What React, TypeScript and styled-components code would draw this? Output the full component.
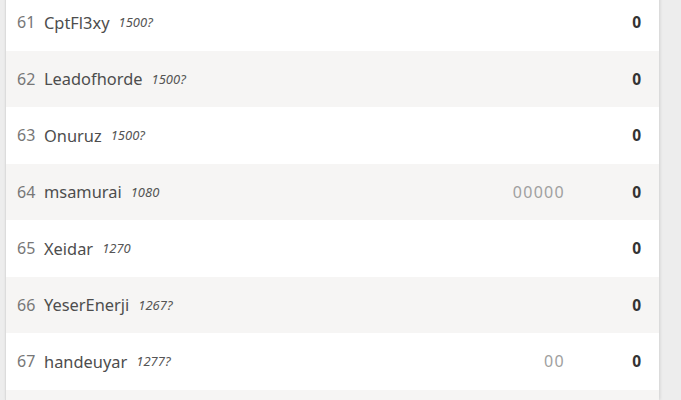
import styled, { createGlobalStyle } from "styled-components";

const GlobalStyle = createGlobalStyle`
    html, body {
        margin: 0;
        padding: 0;
        background: #ededed;
        font-family: "Noto Sans", "Open Sans", sans-serif;
        overflow: hidden;
    }
`;

const Page = styled.div`
    display: flex;
    height: 400px;
    overflow: hidden;
`;

const Panel = styled.div`
    width: 653px;
    margin-left: 5px;
    border-left: 1px solid #dcdcdc;
    background: #fff;
    box-shadow: 1px 0 3px rgba(0, 0, 0, 0.12);
    margin-top: -6px;
`;

const Row = styled.div<{ $odd: boolean }>`
    display: flex;
    align-items: center;
    height: 56.5px;
    padding: 0 18px 0 11px;
    background: ${(p) => (p.$odd ? "#f6f5f4" : "#fff")};
    color: #4d4d4d;
`;

const Rank = styled.span`
    font-size: 16px;
    color: #777;
    width: 27px;
`;

const Name = styled.span`
    font-size: 16.4px;
    color: #4d4d4d;
`;

const Rating = styled.em`
    font-size: 13px;
    color: #555;
    margin-left: 9px;
`;

const Sheet = styled.span`
    margin-left: auto;
    font-size: 16px;
    color: #a0a0a0;
    letter-spacing: 1.3px;
`;

const Total = styled.strong`
    width: 76px;
    text-align: right;
    font-size: 15.5px;
    color: #333;
`;

interface IPlayer {
    rank: number;
    name: string;
    rating: string;
    sheet: string;
}

const players: IPlayer[] = [
    { rank: 61, name: "CptFl3xy", rating: "1500?", sheet: "" },
    { rank: 62, name: "Leadofhorde", rating: "1500?", sheet: "" },
    { rank: 63, name: "Onuruz", rating: "1500?", sheet: "" },
    { rank: 64, name: "msamurai", rating: "1080", sheet: "00000" },
    { rank: 65, name: "Xeidar", rating: "1270", sheet: "" },
    { rank: 66, name: "YeserEnerji", rating: "1267?", sheet: "" },
    { rank: 67, name: "handeuyar", rating: "1277?", sheet: "00" },
];

function App() {
    return (
        <Page>
            <GlobalStyle />
            <Panel>
                {players.map((p, i) => (
                    <Row key={p.rank} $odd={i % 2 === 1}>
                        <Rank>{p.rank}</Rank>
                        <Name>{p.name}</Name>
                        <Rating>{p.rating}</Rating>
                        <Sheet>{p.sheet}</Sheet>
                        <Total>0</Total>
                    </Row>
                ))}
                <Row $odd={true} />
            </Panel>
        </Page>
    );
}

export default App;
